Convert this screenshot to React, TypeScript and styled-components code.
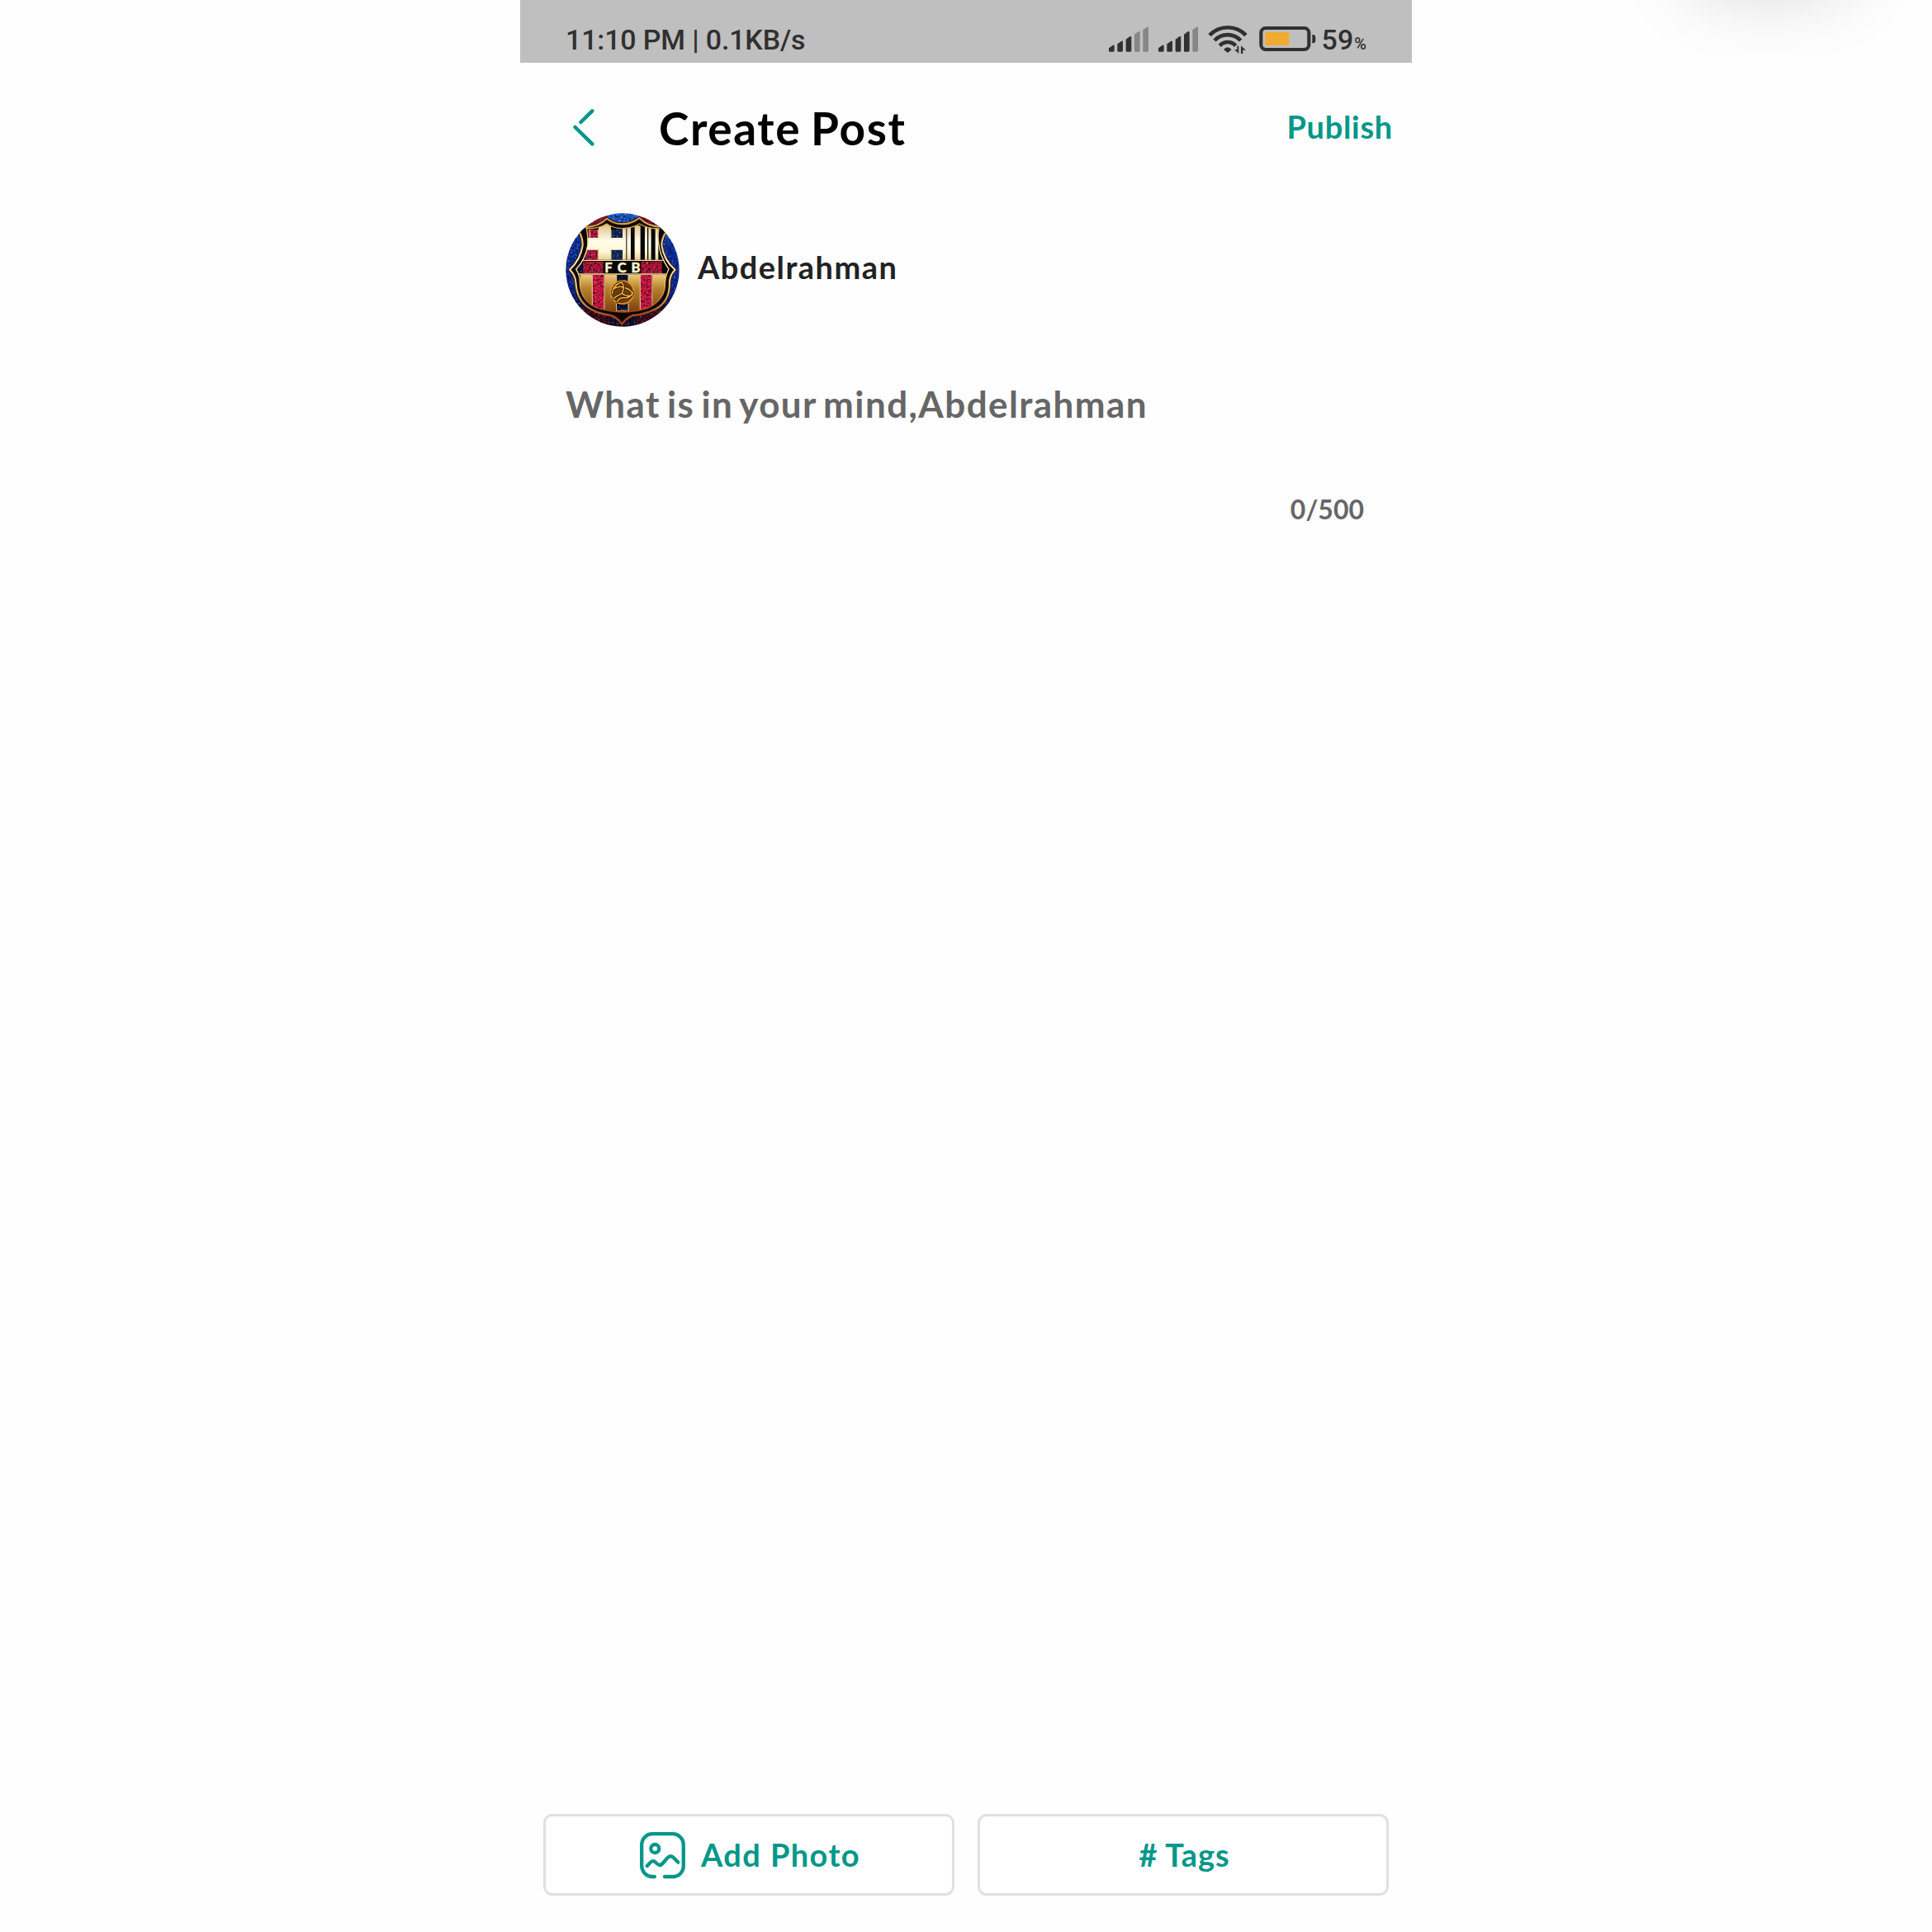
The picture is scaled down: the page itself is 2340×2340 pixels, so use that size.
import React from 'react';
import styled, { createGlobalStyle } from 'styled-components';

const TEAL = '#039789';
const INK = '#303030';

const GlobalStyle = createGlobalStyle`
  *, *::before, *::after { box-sizing: border-box; }
  body { margin: 0; background: #fefefe; }
`;

const Page = styled.div`
  position: relative;
  display: flex;
  justify-content: center;
  width: 100%;
  height: 2340px;
  overflow: hidden;
  background: #fefefe;
  font-family: Lato, 'Liberation Sans', sans-serif;
`;

const TopShade = styled.div`
  position: absolute;
  top: -96px;
  left: 2050px;
  width: 186px;
  height: 76px;
  border-radius: 30px;
  box-shadow: 0 0 92px 6px rgba(0, 0, 0, 0.18);
`;

const Phone = styled.main`
  display: flex;
  flex-direction: column;
  width: 1080px;
  height: 100%;
`;

const StatusBar = styled.div`
  display: flex;
  justify-content: space-between;
  align-items: flex-start;
  height: 76px;
  padding: 28px 55px 0 55px;
  background: #bfbfbf;
  color: ${INK};
  font: 500 34px/40px Roboto, sans-serif;
`;

const Clock = styled.span`
  letter-spacing: -0.16px;
`;

const Indicators = styled.div`
  display: flex;
  align-items: flex-start;
  svg { display: block; margin-top: 2px; }
`;

const SignalSlot = styled.div`
  width: 48px;
  margin-right: 12px;
`;

const WifiSlot = styled.div`
  width: 48px;
  margin-right: 14px;
`;

const BatterySlot = styled.div`
  width: 69px;
  margin-right: 7px;
`;

const Percent = styled.span`
  margin-left: 1px;
  font-size: 20px;
`;

const Header = styled.header`
  display: flex;
  align-items: center;
  height: 154px;
  padding: 0 23px 0 62px;
`;

const BackButton = styled.button`
  display: flex;
  width: 106px;
  padding: 2px 0 0;
  border: 0;
  background: none;
`;

const Title = styled.h1`
  flex: 1;
  margin: 0;
  padding-top: 3px;
  color: #000;
  font-size: 55px;
  font-weight: 700;
  line-height: 64px;
  letter-spacing: 1.6px;
  word-spacing: -3px;
`;

const PublishButton = styled.button`
  padding: 0;
  border: 0;
  background: none;
  color: ${TEAL};
  font: 700 38px/44px Lato, sans-serif;
  letter-spacing: 0.7px;
`;

const Author = styled.section`
  display: flex;
  align-items: center;
  gap: 22px;
  height: 138px;
  margin-top: 28px;
  padding-left: 55px;
`;

const AuthorName = styled.span`
  margin-top: -9px;
  color: #222;
  font-size: 38px;
  font-weight: 700;
  line-height: 44px;
  letter-spacing: 1.45px;
`;

const Composer = styled.section`
  display: flex;
  flex: 1;
  flex-direction: column;
  padding: 67px 58px 0 55px;
  color: #666;
`;

const Prompt = styled.p`
  margin: 0;
  font-size: 44px;
  font-weight: 700;
  line-height: 53px;
  letter-spacing: 1.42px;
  word-spacing: -4px;
`;

const Counter = styled.span`
  align-self: flex-end;
  margin-top: 82px;
  font-size: 32px;
  font-weight: 700;
  line-height: 38px;
`;

const Actions = styled.footer`
  display: grid;
  grid-template-columns: 1fr 1fr;
  gap: 28px;
  padding: 0 28px 44px;
`;

const ActionButton = styled.button<{ $spacing: string }>`
  display: flex;
  align-items: center;
  justify-content: center;
  gap: 19px;
  height: 99px;
  padding: 0 0 1px 3px;
  border: 3px solid #e0e0e0;
  border-radius: 11px;
  background: #fff;
  color: ${TEAL};
  font: 700 38px/44px Lato, sans-serif;
  letter-spacing: ${(p) => p.$spacing};
  svg { margin-top: 3px; }
`;

const tops = [163, 148, 131, 113, 97];

const Signal = ({ level }: { level: number }) => (
  <svg width="48" height="36" viewBox="69 90 144 108">
    {tops.map((top, i) => {
      const x = 69 + i * 31;
      return (
        <path
          key={top}
          d={`M${x} 185V${top + 12}L${x + 15} ${top + 1}Q${x + 20} ${top} ${x + 20} ${top + 4}V184Q${x + 20} 188 ${x + 16} 188H${x + 3}Q${x} 188 ${x} 185Z`}
          fill={i < level ? INK : '#868686'}
        />
      );
    })}
  </svg>
);

const Wifi = () => (
  <svg width="48" height="36" viewBox="429 90 144 108" fill="none" stroke={INK} strokeWidth="14">
    <path d="M435 128A91 91 0 0 1 567 128" />
    <path d="M453 147A65 65 0 0 1 548 147" />
    <path d="M472 166A39 39 0 0 1 530 166" />
    <path d="M486 180Q500 163 515 180L501 192Z" fill={INK} stroke="none" />
    <path d="M535 167H541V195L525 180H535ZM549 195V166L567 182H556V195Z" fill={INK} stroke="none" />
  </svg>
);

const Battery = () => (
  <svg width="69" height="36" viewBox="614 90 207 108">
    <rect x="621" y="102" width="174" height="78" rx="17" fill="none" stroke={INK} strokeWidth="12.5" />
    <rect x="636" y="116" width="87" height="49" rx="3" fill="#f2aa33" />
    <path d="M807 126H812Q819 128 819 135V148Q819 155 812 157H807Z" fill={INK} />
  </svg>
);

const BackIcon = () => (
  <svg width="30" height="46" viewBox="0 0 30 46" stroke={TEAL} strokeWidth="4.5" strokeLinecap="round">
    <path d="M25.3 3.3L11.4 17M4.6 23L25.3 43.3" />
  </svg>
);

const PhotoIcon = () => (
  <svg width="55" height="57" viewBox="0 0 55 57" fill="none" stroke={TEAL} strokeWidth="4.3" strokeLinecap="round" strokeLinejoin="round">
    <path d="M17.8 54H15A12.8 13.5 0 0 1 2.2 41V15A12.8 13 0 0 1 15 2.2H40A12.8 13 0 0 1 52.8 15V41A12.8 13 0 0 1 40 54H30" />
    <circle cx="18.3" cy="20" r="5" />
    <path d="M8.7 41L12.5 37Q15.8 33.2 19.2 36.8L21 38.5Q24.4 41.5 27.6 38L33.4 31.2Q36.9 27.5 40.4 30.6L46.2 36.6" />
  </svg>
);

const SHIELD =
  'M113 104Q165 103 195 72Q218 91 251 92Q287 91 313 70Q345 102 393 102L412 118Q395 142 394 168Q402 225 443 258Q424 276 423 305Q424 373 372 401Q330 421 290 424Q266 433 250 456Q232 431 209 424Q150 415 120 390Q84 360 82 302Q80 278 60 258Q99 222 107 170Q108 143 93 118Z';
const INNER = 'M121 108Q165 110 194 91Q220 108 251 108Q288 108 314 91Q342 109 384 109Q376 150 393 205Q405 235 420 256Q405 285 406 320Q400 370 345 397Q300 412 250 412Q200 411 155 395Q101 370 97 310Q98 278 83 256Q118 220 125 170Q127 135 121 108Z';

const Crest = () => (
  <svg width="138" height="138" viewBox="45 52 414 414">
    <defs>
      <clipPath id="disc"><circle cx="252" cy="259" r="206" /></clipPath>
      <clipPath id="inner"><path d={INNER} /></clipPath>
      <linearGradient id="gold" x1="0" y1="0" x2="0" y2="1">
        <stop offset="0" stopColor="#edc977" />
        <stop offset=".35" stopColor="#b8842f" />
        <stop offset="1" stopColor="#7d3f0c" />
      </linearGradient>
      <linearGradient id="plate" gradientUnits="userSpaceOnUse" x1="0" y1="95" x2="0" y2="225">
        <stop offset="0" stopColor="#dcc38c" />
        <stop offset=".45" stopColor="#fffcea" />
        <stop offset=".75" stopColor="#fff7d4" />
        <stop offset="1" stopColor="#e4cb90" />
      </linearGradient>
      <linearGradient id="rim" x1="0" y1="0" x2="0" y2="1">
        <stop offset="0" stopColor="#d49a3a" />
        <stop offset=".4" stopColor="#fff0bd" />
        <stop offset=".65" stopColor="#efc76c" />
        <stop offset="1" stopColor="#a03c1c" />
      </linearGradient>
      <linearGradient id="field" x1="0" y1="0" x2="0" y2="1">
        <stop offset="0" stopColor="#1a5ccc" />
        <stop offset=".3" stopColor="#0b2f9c" />
        <stop offset=".68" stopColor="#08258c" />
        <stop offset=".85" stopColor="#0b0f3a" />
        <stop offset="1" stopColor="#0c0c24" />
      </linearGradient>
      <filter id="grain" x="0" y="0" width="1" height="1" colorInterpolationFilters="sRGB">
        <feTurbulence type="fractalNoise" baseFrequency=".13" numOctaves="3" seed="4" result="n" />
        <feColorMatrix in="n" type="matrix" values="0 0 0 0 0.85  0 0 0 0 0.85  0 0 0 0 1  4 0 0 0 -2.2" result="w" />
        <feComposite in="w" in2="SourceAlpha" operator="in" result="c" />
        <feComponentTransfer in="c" result="s"><feFuncA type="linear" slope=".32" /></feComponentTransfer>
        <feColorMatrix in="n" type="matrix" values="0 0 0 0 0  0 0 0 0 0  0 0 0 0 0.05  0 4 0 0 -1.9" result="k" />
        <feComposite in="k" in2="SourceAlpha" operator="in" result="d" />
        <feComponentTransfer in="d" result="e"><feFuncA type="linear" slope=".6" /></feComponentTransfer>
        <feMerge><feMergeNode in="SourceGraphic" /><feMergeNode in="e" /><feMergeNode in="s" /></feMerge>
      </filter>
    </defs>
    <g clipPath="url(#disc)">
      <g filter="url(#grain)">
        <rect x="45" y="52" width="414" height="414" fill="url(#field)" />
        <path d="M120 52H205L185 82L120 105ZM300 52H345L385 100L330 88Z" fill="#8c1230" />
        <path d="M95 395L205 425V466H95ZM300 425L400 395V466H300Z" fill="#3a0618" />
      </g>
      <path d={SHIELD} fill="#0b0604" stroke="#2b1309" strokeWidth="11" strokeLinejoin="round" />
      <path d={SHIELD} fill="none" stroke="url(#rim)" strokeWidth="6" strokeLinejoin="round" />
      <path d={INNER} fill="#080608" />
      <g clipPath="url(#inner)">
        <g filter="url(#grain)">
          <path d="M118 112H163V142H118ZM118 185H163V222H118Z" fill="#b01638" />
          <path d="M210 112H252V142H210ZM210 185H252V222H210Z" fill="#10295a" />
          <path d="M108 228H182V272H108ZM320 228H396V272H320Z" fill="#b01236" />
          <path d="M143 276H186V405H143ZM316 276H360V405H316Z" fill="#d0143e" />
          <path d="M230 276H273V412H230ZM84 235H108V272H84Z" fill="#081030" />
        </g>
        <path d="M165 90H210V142H252V186H210V222H165V186H118V142H165Z" fill="url(#plate)" />
        <path d="M252 104H265V222H252ZM268 104H282V222H268ZM296 98H317V222H296ZM333 98H342V222H333ZM346 98H356V222H346ZM371 104H382V222H371Z" fill="url(#plate)" />
        <path d="M98 277H142V400H98ZM187 277H230V412H187ZM273 277H316V412H273ZM361 277H410V400H361Z" fill="url(#gold)" />
        <path d="M142 277V396M186 277V408M230 277V300M230 380V412M273 277V300M273 380V412M316 277V405M360 277V392M133 142V112M163 112V142M210 112V142M210 186V222M163 186V222" stroke="#efd38f" strokeWidth="3" />
        <path d="M100 224H400M90 274H410" stroke="#f5dc9a" strokeWidth="4" />
        <path d="M230 408H274" stroke="#d9952f" strokeWidth="4" />
      </g>
      <path d={INNER} fill="none" stroke="url(#rim)" strokeWidth="4" />
      <text x="187" y="269" fontFamily="Lato, sans-serif" fontSize="50" fontWeight="900" fill="#fff3cb" stroke="#fff3cb" strokeWidth="1" textLength="130" lengthAdjust="spacing">FCB</text>
      <circle cx="251" cy="340" r="42" fill="#6b3c0c" stroke="#e0962a" strokeWidth="5" />
      <g fill="none" strokeLinecap="round">
        <path
          d="M214 346Q216 316 246 304M220 362Q232 352 250 344Q262 318 248 302M250 344Q266 358 288 350M232 374Q242 358 262 360Q282 360 290 340M222 326Q240 316 254 322M262 324Q280 328 288 344"
          stroke="#2e1503"
          strokeWidth="9"
        />
        <path
          d="M214 346Q216 316 246 304M220 362Q232 352 250 344Q262 318 248 302M250 344Q266 358 288 350M232 374Q242 358 262 360Q282 360 290 340M222 326Q240 316 254 322M262 324Q280 328 288 344"
          stroke="#f3bb48"
          strokeWidth="4.5"
        />
      </g>
      <path d="M150 412Q200 428 212 424Q236 432 250 456Q266 432 290 424Q330 420 360 406" fill="none" stroke="#a83d20" strokeWidth="4" strokeDasharray="9 4" />
    </g>
  </svg>
);

export default function App() {
  return (
    <Page>
      <GlobalStyle />
      <TopShade />
      <Phone>
        <StatusBar>
          <Clock>11:10 PM | 0.1KB/s</Clock>
          <Indicators>
            <SignalSlot><Signal level={3} /></SignalSlot>
            <SignalSlot><Signal level={4} /></SignalSlot>
            <WifiSlot><Wifi /></WifiSlot>
            <BatterySlot><Battery /></BatterySlot>
            <span>59<Percent>%</Percent></span>
          </Indicators>
        </StatusBar>
        <Header>
          <BackButton aria-label="Back"><BackIcon /></BackButton>
          <Title>Create Post</Title>
          <PublishButton>Publish</PublishButton>
        </Header>
        <Author>
          <Crest />
          <AuthorName>Abdelrahman</AuthorName>
        </Author>
        <Composer>
          <Prompt>What is in your mind,Abdelrahman</Prompt>
          <Counter>0/500</Counter>
        </Composer>
        <Actions>
          <ActionButton $spacing="1.4px"><PhotoIcon />Add Photo</ActionButton>
          <ActionButton $spacing="0.9px"># Tags</ActionButton>
        </Actions>
      </Phone>
    </Page>
  );
}
